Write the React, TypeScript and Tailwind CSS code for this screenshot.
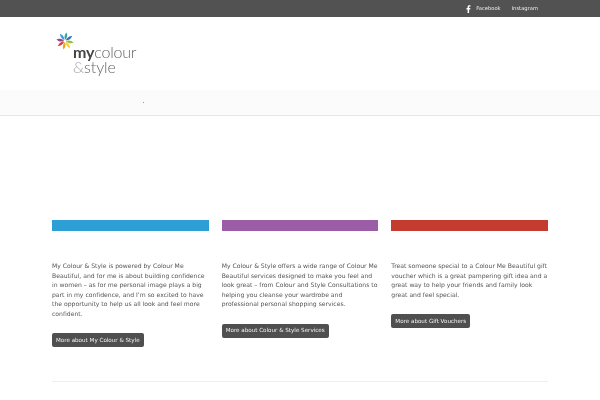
import React from 'react';

const columns = [
    {
        color: 'bg-[#2e9fd4]',
        text: 'My Colour & Style is powered by Colour Me Beautiful, and for me is about building confidence in women – as for me personal image plays a big part in my confidence, and I’m so excited to have the opportunity to help us all look and feel more confident.',
        button: 'More about My Colour & Style',
    },
    {
        color: 'bg-[#9b5ea6]',
        text: 'My Colour & Style offers a wide range of Colour Me Beautiful services designed to make you feel and look great – from Colour and Style Consultations to helping you cleanse your wardrobe and professional personal shopping services.',
        button: 'More about Colour & Style Services',
    },
    {
        color: 'bg-[#c43c30]',
        text: 'Treat someone special to a Colour Me Beautiful gift voucher which is a great pampering gift idea and a great way to help your friends and family look great and feel special.',
        button: 'More about Gift Vouchers',
    },
];

const petals = [
    { angle: 0, color: '#2fa8a0' },
    { angle: 45, color: '#2f6fc0' },
    { angle: 90, color: '#8fc04a' },
    { angle: 135, color: '#f5d33c' },
    { angle: 180, color: '#f0a030' },
    { angle: 225, color: '#d8402f' },
    { angle: 270, color: '#a0408f' },
    { angle: 315, color: '#3aa0d8' },
];

const Logo: React.FC = () => (
    <div className="flex flex-col">
        <svg width="18" height="18" viewBox="0 0 18 18">
            {petals.map((p) => (
                <path key={p.angle} d="M9 8 C7.2 5.5 7.4 2.5 9 0.3 C10.6 2.5 10.8 5.5 9 8Z" fill={p.color} transform={`rotate(${p.angle + 10} 9 9)`} />
            ))}
        </svg>
        <div className="ml-[17px] mt-[-6px] font-['Lato',sans-serif] text-[16px] leading-[15px] text-[#666] blur-[0.3px]">
            <div className="tracking-[-0.2px]"><span className="font-bold text-[#444]">my</span><span className="font-light">colour</span></div>
            <div className="tracking-[-0.1px]"><span className="font-light text-[#aaa]">&amp;</span><span className="font-light">style</span></div>
        </div>
    </div>
);

const App: React.FC = () => {
    return (
        <div className="h-[400px] w-[600px] overflow-hidden bg-white font-['DejaVu_Sans',sans-serif]">
            <div className="flex h-[17px] items-center justify-end gap-[11px] bg-[#525252] pr-[62px] text-[5.2px] text-[#eee]">
                <span className="flex items-center gap-[4px] blur-[0.3px]">
                    <svg width="6" height="8" viewBox="0 0 6 8" fill="#fff">
                        <path d="M1.6 8V4.4H.5V3h1.1V2C1.6.8 2.3.2 3.4.2c.5 0 .9 0 1.1.1v1.2h-.7c-.6 0-.7.3-.7.7V3h1.3l-.2 1.4H3.1V8Z" />
                    </svg>
                    Facebook
                </span>
                <span className="blur-[0.3px]">Instagram</span>
            </div>

            <div className="h-[73px] pl-[56px] pt-[15px]">
                <Logo />
            </div>

            <div className="relative h-[26px] border-b border-[#e6e6e6] bg-[#fbfbfb]">
                <span className="absolute left-[143px] top-[12px] h-px w-px bg-[#999]" />
            </div>

            <div className="mx-[52px] mt-[104px] grid h-[151px] grid-cols-3 gap-x-[13px]">
                {columns.map((col) => (
                    <div key={col.button} className="flex flex-col items-start">
                        <div className={`h-[11px] w-full ${col.color}`} />
                        <p className="mt-[30px] text-[6.1px] leading-[9.5px] text-[#555] blur-[0.25px]">{col.text}</p>
                        <button className="mt-[15px] rounded-[2px] bg-[#4f4f4f] px-[4px] py-[3.5px] text-[5.6px] leading-[7px] text-[#f4f4f4]">
                            <span className="inline-block blur-[0.25px]">{col.button}</span>
                        </button>
                    </div>
                ))}
            </div>

            <div className="mx-[52px] mt-[10px] h-px bg-[#eee]" />
        </div>
    );
};

export default App;
